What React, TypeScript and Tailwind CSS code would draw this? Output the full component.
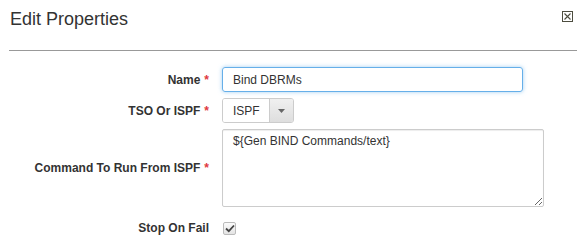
import React from "react";

function Req() {
  return <span className="ml-[4px] text-[#e0383e]">*</span>;
}

export default function App() {
  return (
    <div
      className="w-[579px] h-[245px] bg-white text-[#333] overflow-hidden"
      style={{ fontFamily: '"Liberation Sans", Arial, sans-serif' }}
    >
      {/* Header */}
      <div className="flex items-start justify-between h-[50px] pl-[10px] pr-[6px] pt-[9px]">
        <h1 className="text-[18px] leading-[20px] font-normal text-[#333]">Edit Properties</h1>
        <svg width="11" height="11" viewBox="0 0 11 11" className="mt-[2px]">
          <rect x="0.5" y="0.5" width="10" height="10" fill="none" stroke="#4d4d3f" />
          <path d="M2.5 2.5 L8.5 8.5 M8.5 2.5 L2.5 8.5" stroke="#4d4d3f" strokeWidth="1.1" />
        </svg>
      </div>
      <div className="ml-[9px] mr-[2px] h-px bg-[#999]" />

      {/* Form */}
      <div className="grid grid-cols-[209px_1fr] gap-x-[13px] gap-y-[6px] pt-[16px] text-[12px]">
        <label className="flex items-center justify-end font-bold">
          Name
          <Req />
        </label>
        <div>
          <input
            readOnly
            value="Bind DBRMs"
            className="w-[301px] h-[25px] px-[10px] rounded-[3px] border border-[#66afe9] shadow-[0_0_4px_rgba(102,175,233,0.6)] outline-none text-[12px] text-[#333]"
          />
        </div>

        <label className="flex items-center justify-end font-bold">
          TSO Or ISPF
          <Req />
        </label>
        <div>
          <div className="flex w-[72px] h-[25px] rounded-[3px] border border-[#ccc] overflow-hidden">
            <div className="flex-1 flex items-center pl-[10px] bg-white">ISPF</div>
            <div className="w-[24px] flex items-center justify-center border-l border-[#ccc] bg-gradient-to-b from-[#f0f0f0] to-[#dedede]">
              <svg width="7" height="4" viewBox="0 0 7 4">
                <path d="M0 0 L7 0 L3.5 4 Z" fill="#666" />
              </svg>
            </div>
          </div>
        </div>

        <label className="flex items-center justify-end font-bold">
          Command To Run From ISPF
          <Req />
        </label>
        <div>
          <textarea
            readOnly
            defaultValue="${Gen BIND Commands/text}"
            className="block w-[322px] h-[78px] px-[10px] py-[3px] leading-4 rounded-[2px] border border-[#ccc] shadow-[inset_0_1px_1px_rgba(0,0,0,0.075)] outline-none text-[12px] text-[#333] resize"
          />
        </div>

        <label className="flex items-center justify-end font-bold mt-[8px] h-[14px]">Stop On Fail</label>
        <div className="mt-[8px] flex items-center h-[14px]">
          <div className="ml-[1px] w-[13px] h-[13px] border border-[#bbb] rounded-[2px] bg-gradient-to-b from-[#fbfbfb] to-[#e4e4e4] flex items-center justify-center">
            <svg width="10" height="9" viewBox="0 0 10 9">
              <path d="M1 4.5 L3.8 7.2 L9 1.5" fill="none" stroke="#444" strokeWidth="1.8" />
            </svg>
          </div>
        </div>
      </div>
    </div>
  );
}
